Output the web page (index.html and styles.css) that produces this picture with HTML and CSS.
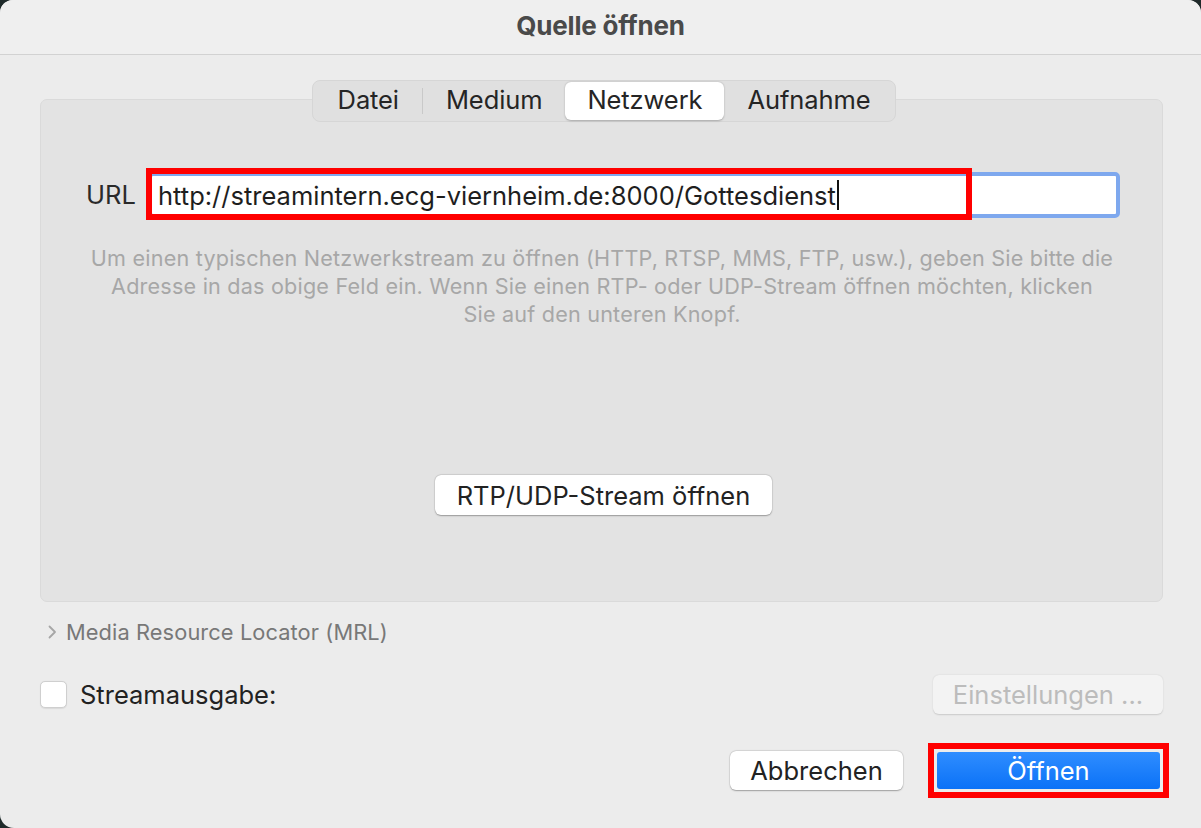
FILE: index.html
```html
<!DOCTYPE html>
<html lang="de">
<head>
<meta charset="utf-8">
<title>Quelle öffnen</title>
<link rel="stylesheet" href="styles.css">
</head>
<body>
<div class="window">
  <div class="titlebar">Quelle öffnen</div>
  <div class="content">
    <div class="segmented-wrap">
      <div class="segmented">
        <div class="seg">Datei</div>
        <div class="seg-div"></div>
        <div class="seg">Medium</div>
        <div class="seg selected">Netzwerk</div>
        <div class="seg">Aufnahme</div>
      </div>
    </div>
    <div class="panel">
      <div class="url-row">
        <label class="url-label">URL</label>
        <div class="field">
          <span class="field-text">http://streamintern.ecg-viernheim.de:8000/Gottesdienst</span><span class="caret"></span>
          <div class="annot annot-field"></div>
        </div>
      </div>
      <p class="help">Um einen typischen Netzwerkstream zu öffnen (HTTP, RTSP, MMS, FTP, usw.), geben Sie bitte die<br>Adresse in das obige Feld ein. Wenn Sie einen RTP- oder UDP-Stream öffnen möchten, klicken<br>Sie auf den unteren Knopf.</p>
      <div class="rtp-row">
        <button class="btn btn-rtp">RTP/UDP-Stream öffnen</button>
      </div>
    </div>
    <div class="mrl-row">
      <svg class="chev" width="11" height="16" viewBox="0 0 11 16"><path d="M2.5 2.5 L8 8 L2.5 13.5" fill="none" stroke="#a6a6a6" stroke-width="1.8" stroke-linecap="round" stroke-linejoin="round"/></svg>
      <span class="mrl-text">Media Resource Locator (MRL)</span>
    </div>
    <div class="stream-row">
      <div class="check-group">
        <span class="checkbox"></span>
        <span class="stream-label">Streamausgabe:</span>
      </div>
      <button class="btn btn-disabled">Einstellungen ...</button>
    </div>
    <div class="action-row">
      <button class="btn btn-cancel">Abbrechen</button>
      <div class="primary-wrap">
        <button class="btn btn-primary">Öffnen</button>
        <div class="annot annot-btn"></div>
      </div>
    </div>
  </div>
</div>
</body>
</html>
```

FILE: styles.css
```css
* { box-sizing: border-box; }
html, body {
  margin: 0;
  padding: 0;
  width: 1201px;
  height: 828px;
  overflow: hidden;
  background: #1f2a2a;
}
body {
  font-family: Inter, "Noto Sans", "Liberation Sans", sans-serif;
  color: #222;
}
.window {
  width: 1201px;
  height: 828px;
  background: #ececec;
  border-radius: 13px 13px 0 14px;
  overflow: hidden;
}
.titlebar {
  height: 55px;
  background: #efefef;
  border-bottom: 1px solid #d2d2d2;
  display: flex;
  align-items: center;
  justify-content: center;
  font-size: 26px;
  font-weight: 700;
  color: #4a4a4a;
  letter-spacing: -0.2px;
  padding-bottom: 3px;
}
.content {
  padding: 0 38px 0 40px;
}
.segmented-wrap {
  display: flex;
  justify-content: center;
  padding-top: 25px;
  position: relative;
  z-index: 2;
  padding-left: 5px;
}
.segmented {
  display: flex;
  align-items: center;
  height: 42px;
  padding: 0 2px;
  background: #e0e0e0;
  border: 1px solid #d6d6d6;
  border-radius: 8px;
}
.seg {
  height: 38px;
  display: flex;
  align-items: center;
  padding: 0 23px 3px;
  font-size: 25.5px;
  color: #252525;
  letter-spacing: -0.1px;
}
.seg-div {
  width: 1px;
  height: 26px;
  background: #c9c9c9;
}
.seg.selected {
  background: #fff;
  border-radius: 6px;
  box-shadow: 0 0.5px 2px rgba(0,0,0,0.25);
  padding: 0 22px 3px;
}
.panel {
  margin-top: -23px;
  height: 503px;
  background: #e3e3e3;
  border: 1px solid #dadada;
  border-radius: 7px;
  padding: 72px 42px 0 45px;
  display: flex;
  flex-direction: column;
}
.url-row {
  display: flex;
  align-items: center;
  height: 46px;
}
.url-label {
  font-size: 25.5px;
  color: #2a2a2a;
  width: 62px;
  padding-bottom: 2px;
}
.field {
  position: relative;
  flex: 1;
  height: 46px;
  background: #fff;
  border: 4px solid #7ea8ee;
  border-radius: 5px;
  display: flex;
  align-items: center;
  padding-left: 6px;
}
.field-text {
  font-size: 25.5px;
  color: #1e1e1e;
}
.caret {
  display: inline-block;
  width: 2px;
  height: 30px;
  background: #111;
  margin-left: 1px;
}
.annot {
  position: absolute;
  border: 6px solid #ff0000;
  pointer-events: none;
}
.annot-field {
  left: -6px;
  top: -8px;
  width: 826px;
  height: 52px;
}
.help {
  margin: 26px 0 0 0;
  text-align: center;
  font-size: 21.6px;
  line-height: 28px;
  color: #a7a7a7;
  letter-spacing: 0.2px;
  margin-left: -48px;
  margin-right: -46px;
}
.rtp-row {
  display: flex;
  justify-content: center;
  margin-top: 147px;
  padding-left: 1px;
}
.btn {
  font-family: inherit;
  font-size: 25.5px;
  border: none;
  background: #fff;
  color: #222;
  border-radius: 6px;
  box-shadow: 0 0.5px 1.5px rgba(0,0,0,0.3), 0 0 0 0.5px rgba(0,0,0,0.08);
  padding: 0;
  display: flex;
  align-items: center;
  justify-content: center;
}
.btn-rtp {
  width: 337px;
  height: 40px;
}
.mrl-row {
  display: flex;
  align-items: center;
  height: 28px;
  margin-top: 16px;
  padding-left: 7px;
  gap: 8px;
}
.mrl-text {
  font-size: 21.8px;
  color: #787878;
  letter-spacing: 0.1px;
}
.stream-row {
  margin-top: 28px;
  display: flex;
  align-items: center;
  justify-content: space-between;
  height: 40px;
}
.check-group {
  display: flex;
  align-items: center;
  gap: 13px;
}
.checkbox {
  width: 27px;
  height: 27px;
  background: #fff;
  border: 1px solid #cfcfcf;
  border-radius: 5px;
  box-shadow: 0 0.5px 1px rgba(0,0,0,0.08);
}
.stream-label {
  font-size: 25.5px;
  color: #222;
}
.btn-disabled {
  width: 230px;
  height: 39px;
  background: #f3f3f3;
  color: #bcbcbc;
  box-shadow: 0 0.5px 1.5px rgba(0,0,0,0.15);
}
.action-row {
  margin-top: 37px;
  display: flex;
  justify-content: flex-end;
  align-items: center;
  gap: 34px;
  padding-right: 3px;
}
.btn-cancel {
  width: 173px;
  height: 39px;
}
.primary-wrap {
  position: relative;
}
.btn-primary {
  width: 223px;
  height: 37px;
  border-radius: 3px;
  color: #fff;
  background: linear-gradient(#2f8dff, #0b72f7);
  box-shadow: none;
}
.annot-btn {
  left: -9px;
  top: -9px;
  width: 241px;
  height: 55px;
}
```
